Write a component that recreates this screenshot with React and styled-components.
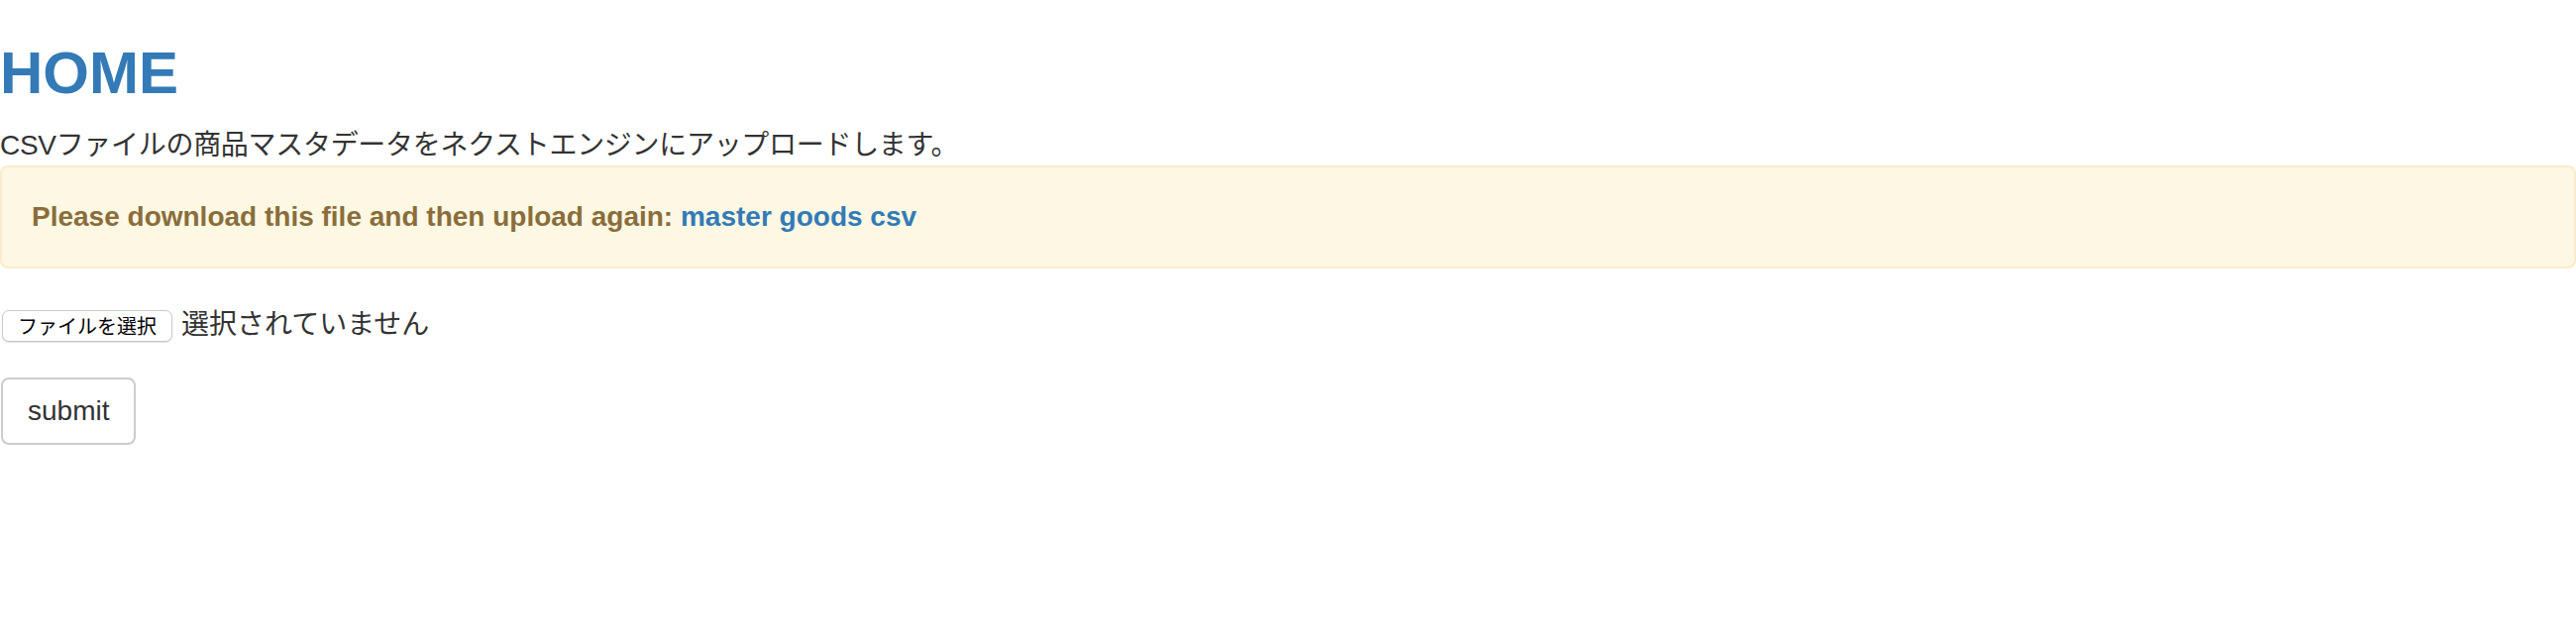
import styled, { createGlobalStyle } from 'styled-components';

const GlobalStyle = createGlobalStyle`
  body {
    margin: 0;
    background: #fff;
    font-family: "Liberation Sans", "Noto Sans CJK JP", sans-serif;
    font-size: 28px;
    line-height: 40px;
    color: #333;
  }
`;

const Page = styled.div`
  display: flex;
  flex-direction: column;
  align-items: stretch;
`;

const Title = styled.h2`
  margin: 41px 0 20px;
  font-size: 60px;
  font-weight: 700;
  line-height: 66px;
  color: #337ab7;
`;

const Lead = styled.div`
  letter-spacing: -0.3px;
`;

const Alert = styled.div`
  padding: 30px;
  margin-bottom: 37px;
  border: 2px solid #faebcc;
  border-radius: 8px;
  background: #fcf8e3;
  color: #8a6d3b;
  font-weight: 700;
`;

const Link = styled.a`
  color: #337ab7;
  text-decoration: none;
`;

const FormGroup = styled.div`
  display: flex;
  align-items: baseline;
  gap: 9px;
  margin-bottom: 33px;
`;

const FileButton = styled.button`
  height: 32px;
  margin-left: 2px;
  padding: 0 15px;
  border: 1px solid #c8c8c8;
  border-radius: 7px;
  background: #fff;
  box-shadow: 0 1px 1px rgba(0, 0, 0, 0.12);
  font-family: "Noto Sans CJK JP", sans-serif;
  font-size: 20px;
  line-height: 30px;
  color: #000;
`;

const FileName = styled.span`
  font-size: 28px;
  color: #333;
`;

const SubmitButton = styled.button`
  align-self: flex-start;
  margin-left: 1px;
  padding: 12px 25px;
  border: 2px solid #ccc;
  border-radius: 8px;
  background: #fff;
  font-family: "Liberation Sans", sans-serif;
  font-size: 28px;
  line-height: 40px;
  color: #333;
`;

export default function App() {
  return (
    <>
      <GlobalStyle />
      <Page>
        <Title>HOME</Title>
        <Lead>CSVファイルの商品マスタデータをネクストエンジンにアップロードします。</Lead>
        <Alert>
          Please download this file and then upload again: <Link href="#">master goods csv</Link>
        </Alert>
        <FormGroup>
          <FileButton type="button">ファイルを選択</FileButton>
          <FileName>選択されていません</FileName>
        </FormGroup>
        <SubmitButton type="submit">submit</SubmitButton>
      </Page>
    </>
  );
}
